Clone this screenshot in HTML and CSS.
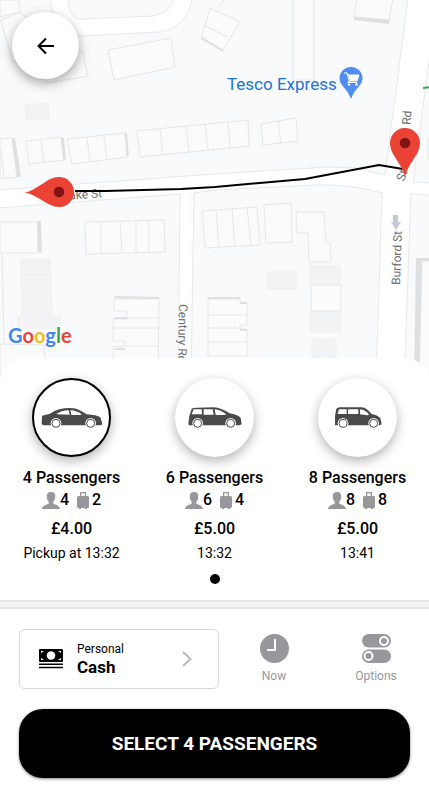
FILE: index.html
```html
<!DOCTYPE html>
<html lang="en">
<head>
    <meta charset="UTF-8">
    <meta name="viewport" content="width=device-width, initial-scale=1.0">
    <title>Choose your ride</title>
    <link rel="stylesheet" href="styles.css">
</head>
<body>
    <!-- Shared icons -->
    <svg class="sprite" aria-hidden="true">
        <symbol id="icon-person" viewBox="0 0 18 17">
            <path d="M9 0c3.300 0 4.500 2 4.200 5.200-.2 2.200-1 3.600-1.900 4.500v2c1.700 1 6.200 1.300 6.700 5.300H0c.5-4 5-4.300 6.700-5.300v-2C5.800 8.800 5 7.400 4.800 5.200 4.500 2 5.700 0 9 0z"/>
        </symbol>
        <symbol id="icon-bag" viewBox="0 0 12 17">
            <path d="M3 0h6v4h1.500A1.500 1.500 0 0 1 12 5.500v9a1.500 1.500 0 0 1-1.500 1.500H10v1H8v-1H4v1H2v-1h-.5A1.500 1.500 0 0 1 0 14.500v-9A1.500 1.500 0 0 1 1.500 4H3zM4.300 1.200V4h3.400V1.200z" fill-rule="evenodd"/>
        </symbol>
    </svg>

    <main class="app">
        <!-- Map -->
        <section class="map" aria-label="Route map">
            <svg class="map-canvas" viewBox="0 0 429 380" preserveAspectRatio="xMidYMin slice">
                <g class="land">
                    <path d="M-2 190 215 174 328 167 355 168 385 175 408-2H192C190 18 175 31 160 32L80 36C60 34 52 18 50-2H-2z"/>
                    <path d="M68-2C69 14 73 19 83 19L153 16Q172 12 173-2z"/>
                    <path d="M-2 208 180 194 178 382H-2z"/>
                    <path d="M194 193 215 190 315 185Q352 184 382 193L376 382H191z"/>
                    <path d="M431 46 413 182 431 183z"/>
                    <path d="M411 194 431 195V382H404z"/>
                </g>
                <g class="plots">
                    <path d="M25 105 48 103 49 119 26 120z"/>
                    <path d="M21 259H50L52 315H22zM21 275H50M22 295H50M18 316H60V328H18z"/>
                    <path d="M268 272H296V289H268zM310 266H340V286H310zM310 311H340V332H310zM312 339H336V360H312z"/>
                </g>
                <g class="buildings">
                    <path d="M0 0H19L20 12 0 17zM1 20 20 12 40 28 83 53 88 76 48 83 12 60z"/>
                    <path d="M108 50 171 38 175 67 114 80z"/>
                    <path d="M0 139 12 138 17 177 0 179zM1 150 4 178"/>
                    <path d="M26 141 61 137 64 160 29 164zM41 139 44 162"/>
                    <path d="M67 139 125 133 127 157 72 164zM87 138 90 161M104 135 107 159"/>
                    <path d="M137 131 248 120 249 146 140 157zM160 129 163 155M186 126 189 152M205 124 208 150M228 122 230 149"/>
                    <path d="M261 124 296 118 298 141 263 145zM278 121 281 143"/>
                    <path d="M210 8 240 22 223 50 202 37zM203 25 228 37M224 0 220 6"/>
                    <path d="M293-2H314V80H293z"/>
                    <path d="M357-2H393L389 20 354 17z"/>
                    <path d="M0 222H38V253H0zM2 253 4 344"/>
                    <path d="M85 222 164 220 165 252 86 254zM101 222V254M120 221 122 253M136 221V252M149 221V252"/>
                    <path d="M202 211 257 207 260 245 205 248zM216 210 219 248M232 208 235 247M247 207 251 245"/>
                    <path d="M264 205 291 203 292 242 266 243z"/>
                    <path d="M296 212H324L326 243H330L331 262H309L308 233H297z"/>
                    <path d="M311 285H341V311H311z"/>
                    <path d="M114 299H159L158 382H113V347L125 346V341H113V319H127V311H114zM114 318H158M114 328H158M125 346H158"/>
                    <path d="M208 299H240V303H247V325H240V329H247V356H208zM208 315H247M208 328H240M208 342H247"/>
                    <path d="M0 344 44 345 46 382H0z"/>
                    <path d="M422 261H431V382H419z"/>
                    <path d="M428 138H431V160H428z"/>
                </g>
                <g class="shade">
                    <path d="M12 138 15 138 21 177 17 177z"/>
                    <path d="M61 138 64 138 66 160 63 159z"/>
                    <path d="M125 133 127 133 129 157 127 156z"/>
                    <path d="M37 221 41 221 42 253 38 252z"/>
                    <path d="M113 298 115 296 159 297V299zM116 317H127V319H114zM116 348H125V350H114zM208 297H240V299H208zM240 302H247V304H240zM240 329H247V331H240z"/>
                    <path d="M354 17 390 20 389 24 354 20z"/>
                    <path d="M201 37 223 50V52L201 39z"/>
                    <path d="M416 258H431V261H422L419 382H414z"/>
                </g>
                <path class="park-line" d="M423 88 431 87"/>
                <path class="one-way" d="M393 215h5v7h3l-5 8-5-8h2z"/>

                <g class="street">
                    <text transform="translate(63 200) rotate(-4)">Lake St</text>
                    <text transform="translate(179 304) rotate(91)">Century Rd</text>
                    <text transform="translate(400 285) rotate(-88)">Burford St</text>
                    <text transform="translate(404 182) rotate(-70)">St</text>
                    <text transform="translate(410 131) rotate(-86)">l Rd</text>
                </g>

                <text class="place" x="227" y="90">Tesco Express</text>
                <path class="place-pin" d="M351 67a11.500 11.500 0 0 1 11.500 11.500c0 7-8 10-11.500 20.500-3.500-10.500-11.500-13.500-11.500-20.500A11.500 11.500 0 0 1 351 67z"/>
                <path class="cart" d="M344 73h3l1 2h11l-2 6h-8l-1 1.500h9M347 74l2.500 7.500"/>
                <path class="cart-fill" d="M348 75h11l-2 6h-7z"/>
                <circle class="cart-fill" cx="349" cy="84.500" r="1.300"/>
                <circle class="cart-fill" cx="356.500" cy="84.500" r="1.300"/>

                <path class="route" d="M75 191H105L181 189 215 187 305 179 379 165 403 169"/>

                <g transform="translate(59 192) rotate(89)">
                    <path class="pin" d="M0 34C-3 20-15 12-15 0A15 15 0 0 1 15 0C15 12 3 20 0 34z"/>
                    <circle class="pin-dot" r="5.300"/>
                </g>
                <g transform="translate(405 143)">
                    <path class="pin" d="M0 34C-3 20-15 12-15 0A15 15 0 0 1 15 0C15 12 3 20 0 34z"/>
                    <circle class="pin-dot" r="5.300"/>
                </g>

                <text class="google" x="8" y="343"><tspan class="blue">G</tspan><tspan class="red">o</tspan><tspan class="yellow">o</tspan><tspan class="blue">g</tspan><tspan class="green">l</tspan><tspan class="red">e</tspan></text>
            </svg>
            <button class="back" type="button" aria-label="Back">
                <svg width="18" height="18" viewBox="0 0 18 18"><path d="M17 9H2M9 1.500 1.500 9 9 16.500"/></svg>
            </button>
        </section>

        <!-- Vehicle choice -->
        <section class="vehicles">
            <div class="vehicle-list">
                <button class="vehicle selected" type="button">
                    <span class="vehicle-photo">
                        <svg width="62" height="22" viewBox="121 155 186 66">
                            <path class="car-body" d="M123 206 124 181 148 175C165 163 185 158 207 158 232 158 245 169 258 177 278 178 292 181 300 187L305 207 300 210H128z"/>
                            <path class="car-glass" d="M167 176Q182 166 204 165L207 178 171 177zM209 165Q229 166 243 177L239 179H212z"/>
                            <circle class="wheel-arch" cx="166" cy="204" r="16"/>
                            <circle class="wheel" cx="166" cy="204" r="12"/>
                            <circle class="wheel-arch" cx="270" cy="204" r="16"/>
                            <circle class="wheel" cx="270" cy="204" r="12"/>
                        </svg>
                    </span>
                    <span class="vehicle-name">4 Passengers</span>
                    <span class="capacity">
                        <svg class="person"><use href="#icon-person"/></svg>4
                        <svg class="bag"><use href="#icon-bag"/></svg>2
                    </span>
                    <span class="price">£4.00</span>
                    <span class="pickup">Pickup at 13:32</span>
                </button>
                <button class="vehicle" type="button">
                    <span class="vehicle-photo">
                        <svg width="56" height="22" viewBox="560 155 168 66">
                            <path class="car-body" d="M564 206 567 182 574 160Q578 157 590 157L640 156Q662 157 688 174 712 178 721 187L724 207 717 210H566z"/>
                            <path class="car-glass" d="M574 177 580 162H604L605 177zM610 162H637L640 178H610zM643 162Q660 163 678 177L672 179H646z"/>
                            <circle class="wheel-arch" cx="592" cy="204" r="16"/>
                            <circle class="wheel" cx="592" cy="204" r="12"/>
                            <circle class="wheel-arch" cx="691" cy="204" r="16"/>
                            <circle class="wheel" cx="691" cy="204" r="12"/>
                        </svg>
                    </span>
                    <span class="vehicle-name">6 Passengers</span>
                    <span class="capacity">
                        <svg class="person"><use href="#icon-person"/></svg>6
                        <svg class="bag"><use href="#icon-bag"/></svg>4
                    </span>
                    <span class="price">£5.00</span>
                    <span class="pickup">13:32</span>
                </button>
                <button class="vehicle" type="button">
                    <span class="vehicle-photo">
                        <svg width="48" height="22" viewBox="355 155 144 66">
                            <path class="car-body" d="M358 206V182L362 160 370 156H438Q452 157 468 176 488 180 494 189L498 207 492 210H358z"/>
                            <path class="car-glass" d="M366 176 370 162H393V176zM397 162H428V176H397zM433 162Q449 163 460 178L455 180 433 177z"/>
                            <circle class="wheel-arch" cx="382" cy="204" r="16"/>
                            <circle class="wheel" cx="382" cy="204" r="12"/>
                            <circle class="wheel-arch" cx="474" cy="204" r="16"/>
                            <circle class="wheel" cx="474" cy="204" r="12"/>
                        </svg>
                    </span>
                    <span class="vehicle-name">8 Passengers</span>
                    <span class="capacity">
                        <svg class="person"><use href="#icon-person"/></svg>8
                        <svg class="bag"><use href="#icon-bag"/></svg>8
                    </span>
                    <span class="price">£5.00</span>
                    <span class="pickup">13:41</span>
                </button>
            </div>
            <div class="page-dot"></div>
        </section>

        <div class="divider"></div>

        <!-- Booking -->
        <section class="booking">
            <div class="booking-options">
                <button class="payment" type="button">
                    <svg class="cash" width="24" height="20" viewBox="0 0 24 20">
                        <rect width="24" height="13" rx="1"/>
                        <circle class="cut" cx="12" cy="6.500" r="4.300"/>
                        <path class="cut" d="M2 2h3L2 4zM22 2h-3l3 2zM2 11h3L2 9zM22 11h-3l3-2z"/>
                        <path d="M0 14.500h24V16H0zM0 17.800h24v1.500H0z"/>
                    </svg>
                    <span class="payment-text">
                        <span class="payment-type">Personal</span>
                        <span class="payment-name">Cash</span>
                    </span>
                    <svg class="chevron" width="10" height="16" viewBox="0 0 10 16"><path d="M1 1 8.500 8 1 15"/></svg>
                </button>
                <button class="option" type="button">
                    <svg width="29" height="29" viewBox="0 0 29 29">
                        <circle cx="14.500" cy="14.500" r="14.500"/>
                        <path class="hands" d="M15 5V16H7"/>
                    </svg>
                    Now
                </button>
                <button class="option" type="button">
                    <svg width="29" height="29" viewBox="0 0 29 29">
                        <rect width="29" height="13.500" rx="6.700"/>
                        <rect y="15.500" width="29" height="13.500" rx="6.700"/>
                        <circle class="knob" cx="22" cy="7" r="4"/>
                        <circle class="knob" cx="6.500" cy="22" r="4"/>
                    </svg>
                    Options
                </button>
            </div>
            <button class="select-btn" type="button">SELECT 4 PASSENGERS</button>
        </section>
    </main>
</body>
</html>
```
FILE: styles.css
```css
* {
    margin: 0;
    padding: 0;
    box-sizing: border-box;
}

body {
    background: #fff;
    color: #000;
    min-height: 100vh;
    font-family: Roboto, 'Liberation Sans', sans-serif;
}

button {
    border: none;
    background: none;
    color: inherit;
    font-family: inherit;
    cursor: pointer;
}

.sprite {
    display: none;
}

/* Map */
.map {
    position: relative;
    height: 380px;
    overflow: hidden;
}

.map-canvas {
    display: block;
    width: 100%;
    height: 100%;
    background: #fff;
}

.land {
    fill: #f8fafb;
    stroke: #e6e8e9;
}

.plots {
    fill: #f2f3f4;
    stroke: #eeeff0;
}

.shade {
    fill: #dedfe0;
}

.buildings {
    fill: #fbfbfb;
    stroke: #e6e6e6;
}

.park-line {
    fill: none;
    stroke: #34a853;
    stroke-width: 2;
}

.one-way {
    fill: #c5c8da;
}

.street {
    font-size: 12px;
    fill: #6b6e72;
    stroke: #fff;
    stroke-width: 2px;
    paint-order: stroke;
}

.place {
    font-size: 17px;
    fill: #1a73d8;
}

.place-pin {
    fill: #4f8df0;
}

.cart {
    fill: none;
    stroke: #fff;
}

.cart-fill {
    fill: #fff;
}

.route {
    fill: none;
    stroke: #000;
    stroke-width: 2;
}

.pin {
    fill: #ea4335;
}

.pin-dot {
    fill: #811411;
}

.google {
    font-family: Lato, sans-serif;
    font-size: 20px;
    font-weight: 700;
    stroke: #fff;
    stroke-width: 2px;
    paint-order: stroke;
}

.blue {
    fill: #4285f4;
}

.red {
    fill: #ea4335;
}

.yellow {
    fill: #fbbc05;
}

.green {
    fill: #34a853;
}

.back {
    position: absolute;
    top: 12px;
    left: 12px;
    display: flex;
    align-items: center;
    justify-content: center;
    width: 67px;
    height: 67px;
    border-radius: 50%;
    background: #fff;
    box-shadow: 0 4px 12px rgba(0, 0, 0, 0.35);
}

.back svg {
    fill: none;
    stroke: #000;
    stroke-width: 2;
}

/* Vehicle choice */
.vehicles {
    position: relative;
    margin-top: -22px;
    padding: 20px 0 16px;
    border-radius: 24px 24px 0 0;
    background: #fff;
}

.vehicle-list {
    display: grid;
    grid-template-columns: repeat(3, 1fr);
}

.vehicle {
    display: flex;
    flex-direction: column;
    align-items: center;
}

.vehicle-photo {
    display: flex;
    align-items: center;
    justify-content: center;
    width: 79px;
    height: 79px;
    margin-bottom: 10px;
    border-radius: 50%;
    background: #fff;
    box-shadow: 0 4px 12px rgba(0, 0, 0, 0.3);
}

.selected .vehicle-photo {
    border: 2px solid #000;
}

.car-body {
    fill: #4a4a4a;
}

.car-glass,
.wheel-arch {
    fill: #fff;
}

.wheel {
    fill: #fff;
    stroke: #4a4a4a;
    stroke-width: 3;
}

.vehicle-name {
    font-size: 16px;
    font-weight: 500;
    line-height: 22px;
}

.capacity {
    display: flex;
    align-items: center;
    font-size: 16px;
    font-weight: 500;
    line-height: 22px;
}

.capacity svg {
    fill: #97979c;
}

.person {
    width: 18px;
    height: 17px;
}

.bag {
    width: 12px;
    height: 17px;
    margin: 0 3px 0 8px;
}

.price {
    margin-top: 7px;
    font-size: 16px;
    font-weight: 500;
    line-height: 22px;
}

.pickup {
    margin-top: 2px;
    font-size: 14px;
    line-height: 22px;
}

.page-dot {
    width: 10px;
    height: 10px;
    margin: 10px auto 0;
    border-radius: 50%;
    background: #000;
}

.divider {
    height: 9px;
    border: solid #e4e4e4;
    border-width: 2px 0;
    background: #f4f4f4;
}

/* Booking */
.booking {
    padding: 20px 0;
}

.booking-options {
    display: grid;
    grid-template-columns: 2fr 1fr 1fr;
    padding: 0 2px 0 19px;
}

.payment {
    display: flex;
    align-items: center;
    height: 60px;
    margin-right: 4px;
    padding: 0 26px 0 19px;
    border: 1px solid #d8d8d8;
    border-radius: 6px;
    text-align: left;
}

.cash .cut {
    fill: #fff;
}

.payment-text {
    flex: 1;
    margin-left: 14px;
}

.payment-type {
    display: block;
    font-size: 12px;
    line-height: 16px;
}

.payment-name {
    display: block;
    font-size: 17px;
    font-weight: 700;
    line-height: 20px;
}

.chevron {
    fill: none;
    stroke: #b8b8b8;
    stroke-width: 2;
}

.option {
    display: flex;
    flex-direction: column;
    align-items: center;
    padding-top: 5px;
    color: #97979c;
    font-size: 12px;
    line-height: 16px;
}

.option svg {
    margin-bottom: 5px;
    fill: #97979c;
}

.option .hands,
.option .knob {
    fill: none;
    stroke: #fff;
    stroke-width: 2;
}

.select-btn {
    display: block;
    width: calc(100% - 38px);
    height: 69px;
    margin: 20px auto 0;
    border-radius: 24px;
    background: #000;
    box-shadow: 0 1px 3px rgba(0, 0, 0, 0.5);
    color: #fff;
    font-size: 19px;
    font-weight: 700;
}
```
